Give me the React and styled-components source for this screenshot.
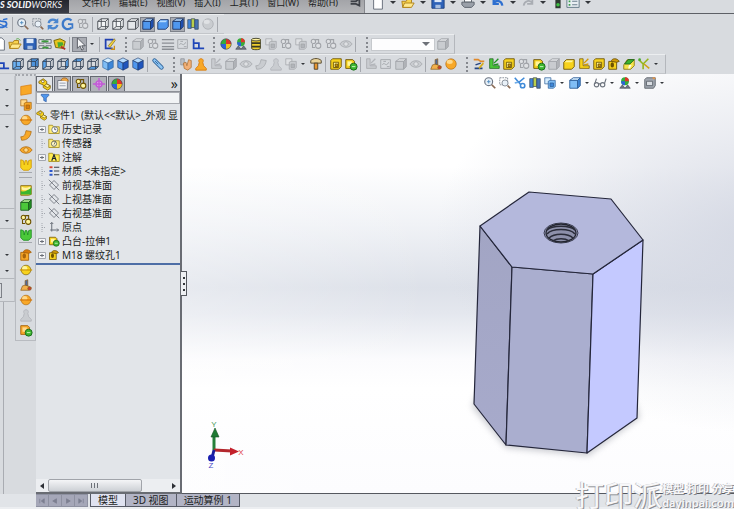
import React from 'react'
import styled, { createGlobalStyle, css } from 'styled-components'

const font = `'Noto Sans', 'Noto Sans CJK SC', sans-serif`

const GlobalStyle = createGlobalStyle`
  * {
    box-sizing: border-box;
  }

  body {
    margin: 0;
    overflow: hidden;
    background: #d8dbdf;
    color: #1c1e22;
    font-family: ${font};
    font-size: 10px;
    line-height: 14px;
  }

  button,
  input,
  select {
    margin: 0;
    padding: 0;
    border: 0;
    border-radius: 0;
    background: none;
    color: inherit;
    font: inherit;
  }
`

/* ---------- icons ---------- */

const tones = {
  blue: ['#b5dcff', '#4f97ee', '#1f55bd', '#1b3566'],
  sky: ['#d8efff', '#7fbdf5', '#3d86d8', '#2b5c96'],
  gold: ['#fff59a', '#f7d21c', '#d19a08', '#6d5200'],
  orange: ['#ffd98a', '#f8a828', '#d87a0c', '#a8640c'],
  green: ['#b9f59a', '#4bc93a', '#1f8f22', '#1b5c1c'],
  gray: ['#dfe1e4', '#c9ccd0', '#b2b5ba', '#a0a3a8'],
  wire: ['#f3f5f7', '#e4e7ea', '#cfd3d8', '#44484f']
}

const wireCube = <path d="M2 5h9v9H2zM2 5l4-3h8v9l-3 3M11 5l3-3M6 2v9h8M6 11l-4 3" fill="none" stroke="#2f3d50" />

const shapes = {
  cube: ([l, m, d, s]) => (
    <g stroke={s} strokeLinejoin="round">
      <path d="M2 5l4-3h8l-3 3z" fill={l} />
      <path d="M2 5h9v9H2z" fill={m} />
      <path d="M11 5l3-3v9l-3 3z" fill={d} />
    </g>
  ),
  frame: ([l, m, d, s]) => (
    <g stroke={s} fill="none">
      <path d="M2 5h9v9H2zM2 5l4-3h8v9l-3 3M11 5l3-3" fill={l} />
      <path d="M6 2v9h8M6 11l-4 3" />
    </g>
  ),
  faceFront: () => (
    <g>
      <path d="M2 5h9v9H2z" fill="#6cb2f4" />
      {wireCube}
    </g>
  ),
  faceBack: () => (
    <g>
      <path d="M6 2h8v9H6z" fill="#4c93dd" />
      {wireCube}
    </g>
  ),
  faceLeft: () => (
    <g>
      <path d="M2 5l4-3v9l-4 3z" fill="#5ba6ef" />
      {wireCube}
    </g>
  ),
  faceRight: () => (
    <g>
      <path d="M11 5l3-3v9l-3 3z" fill="#5ba6ef" />
      {wireCube}
    </g>
  ),
  faceTop: () => (
    <g>
      <path d="M2 5l4-3h8l-3 3z" fill="#5ba6ef" />
      {wireCube}
    </g>
  ),
  faceBottom: () => (
    <g>
      <path d="M2 14l4-3h8l-3 3z" fill="#5ba6ef" />
      {wireCube}
    </g>
  ),
  iso: ([l, m, d, s]) => (
    <g stroke={s} strokeWidth=".7">
      <path d="M8 1l6 3-6 3-6-3z" fill={l} />
      <path d="M2 4l6 3v8l-6-3z" fill={m} />
      <path d="M14 4L8 7v8l6-3z" fill={d} />
    </g>
  ),
  block: ([l, m, d, s]) => (
    <g stroke={s}>
      <path d="M2 4l2-2h10v9l-3 3H2z" fill={m} />
      <path d="M5 6h6v6H5z" fill={l} />
      <path d="M7 8h3v3H7z" fill={d} />
    </g>
  ),
  solid: ([l, m, d, s]) => (
    <g stroke={s}>
      <path d="M2 6l3-3h9v8l-3 3H2z" fill={m} />
      <path d="M3 6l2-2h8l-2 2z" fill={l} stroke="none" />
    </g>
  ),
  stack: ([l, m, d, s]) => (
    <g stroke={s} strokeWidth=".8">
      <path d="M2 2h7v7H2z" fill={l} />
      <path d="M6 6l2-1h6v7l-2 2H6z" fill={m} />
      <path d="M8 8h4v4H8z" fill={d} />
    </g>
  ),
  blockg: ([l, m, d, s]) => (
    <g>
      <path d="M2 3h8l2 2v8H2z" fill={m} stroke={s} />
      <path d="M4 5h5v5H4z" fill={l} />
      <circle cx="11" cy="11" r="4" fill="#3cb52e" stroke="#17651a" />
      <path d="M9 11h4" stroke="#d8ffd0" />
    </g>
  ),
  ball: ([l, m, d, s]) => (
    <g>
      <circle cx="8" cy="8" r="5.5" fill={m} stroke={s} strokeWidth=".7" />
      <ellipse cx="6.5" cy="6" rx="3" ry="2.5" fill={l} />
      <path d="M1 8h14" stroke={d} strokeWidth="1.5" />
    </g>
  ),
  sphere: ([l, m, d, s]) => (
    <g>
      <circle cx="8" cy="8" r="6" fill={m} stroke={s} strokeWidth=".7" />
      <ellipse cx="6.5" cy="5.5" rx="3.5" ry="2.5" fill={l} />
    </g>
  ),
  sweep: ([l, m, d, s]) => (
    <path d="M2 10c4 0 5-2 6-7l6 1c-1 6-4 10-11 10z" fill={m} stroke={s} strokeWidth=".8" />
  ),
  loft: ([l, m, d, s]) => (
    <g stroke={s} strokeWidth=".8">
      <path d="M1 8c3-5 11-5 14 0-3 5-11 5-14 0z" fill={m} />
      <path d="M5 8l3-3 3 3-3 3z" fill={l} />
    </g>
  ),
  plate: ([l, m, d, s]) => <path d="M2 4l12-2v10L2 14z" fill={m} stroke={d} strokeWidth=".8" />,
  prongs: ([l, m, d, s]) => (
    <path d="M2 2l3 1 1 5 1-5h2l1 5 1-5 3-1v9l-3 3H5l-3-3z" fill={m} stroke={d} />
  ),
  chess: ([l, m, d, s]) => (
    <path d="M8 2c3 0 3 3 2 4l1 4 3 3v2H2v-2l3-3 1-4C5 5 5 2 8 2z" fill={m} stroke={d} />
  ),
  corner: ([l, m, d, s]) => (
    <g>
      <path d="M3 2v11h11v-3H7V2z" fill={m} stroke={s} strokeWidth=".8" />
      <path d="M8 7l5-5M8 9l5-1" stroke={d} strokeWidth="1.5" />
    </g>
  ),
  hole: ([l, m, d, s]) => (
    <g>
      <path d="M2 5h9v9H2z" fill={m} stroke={s} />
      <path d="M5 5c0-4 7-4 9 0l-3 1z" fill={d} stroke={s} />
      <ellipse cx="6" cy="9" rx="2" ry="3" fill={s} />
    </g>
  ),
  surface: () => (
    <g>
      <path d="M2 3h12v10l-3 1H2z" fill="#f1cf2c" stroke="#8a6b12" />
      <path d="M2 9c4 2 8-1 12-4v8H2z" fill="#3cb52e" />
      <path d="M3 4c3 2 6 2 10 0v2c-4 3-8 3-10 1z" fill="#fff3a3" />
    </g>
  ),
  sheet: ([l, m, d, s]) => (
    <g fill="none" stroke={s}>
      <path d="M2 3h11v10H2z" />
      <path d="M4 9c2-5 4 4 7-3M5 5h3M9 11h3" />
    </g>
  ),
  part: ([l, m, d, s]) => (
    <g stroke={s} strokeWidth=".8">
      <path d="M1 5l5-3 4 3v3l4 2v3l-3 2-5-3V9L1 7z" fill={m} />
      <circle cx="5.5" cy="5" r="1.5" fill="#fff" />
      <path d="M10 8l4 2-3 2-4-2z" fill={l} />
    </g>
  ),
  link: ([l, m, d, s]) => (
    <g stroke={s} fill="none" strokeWidth="1.2">
      <circle cx="5" cy="5" r="2.5" fill={l} />
      <circle cx="10.5" cy="10" r="3" fill={l} />
      <path d="M7 3h4v4M4 8v4h3" />
    </g>
  ),
  zoom: () => (
    <g fill="none" stroke="#6b7482">
      <circle cx="6.5" cy="6.5" r="4.5" fill="#e9f1f8" strokeWidth="1.3" />
      <path d="M4.5 6.5h4M6.5 4.5v4" stroke="#4d88bd" />
      <path d="M10 10l4 4" stroke="#8a6b55" strokeWidth="2" />
    </g>
  ),
  zoomArea: () => (
    <g fill="none" stroke="#7d8590">
      <path d="M2 2h9v8H2z" strokeDasharray="2 1" />
      <circle cx="8" cy="8" r="3.5" fill="#e9f1f8" />
      <path d="M11 11l3 3" stroke="#8a6b55" strokeWidth="2" />
    </g>
  ),
  rotate: () => (
    <g fill="none" stroke="#4a86cf" strokeWidth="2.6">
      <path d="M3 7c1-5 8-5 10-1M13 9c-1 5-8 5-10 1" />
      <path d="M14 1v6H8zM2 15V9h6z" fill="#4a86cf" stroke="none" />
    </g>
  ),
  spin: () => (
    <g fill="none" stroke="#3c79c9" strokeWidth="2.6">
      <path d="M12 4C8 0 2 3 2 8s6 8 10 4" />
      <path d="M8 8h5v5" strokeWidth="2" />
    </g>
  ),
  swirl: () => (
    <g fill="none" stroke="#2f6fd0" strokeWidth="2">
      <path d="M3 3c2 4 8 0 9 4s-6 6-9 4" />
      <path d="M2 7l11 5M8 3l5-1" strokeWidth="1.5" />
    </g>
  ),
  measure: () => (
    <g fill="none" stroke="#3f8ad8" strokeWidth="1.8">
      <path d="M2 2l7 8M13 2l-6 5" />
      <circle cx="11" cy="11" r="2.5" />
      <path d="M2 8l4-1" stroke="#6cabe8" />
    </g>
  ),
  clip: () => (
    <g fill="none" strokeLinecap="round">
      <path d="M4 4l8 8" stroke="#2d5f96" strokeWidth="5" />
      <path d="M4 4l8 8" stroke="#8cc4f2" strokeWidth="3" />
      <path d="M5 5l3 3" stroke="#2d5f96" />
    </g>
  ),
  section: () => (
    <g stroke="#35465a" strokeWidth=".8">
      <path d="M2 3h4v10H2z" fill="#3e86df" />
      <path d="M6 2h4v10H6z" fill="#b9cf4c" />
      <path d="M10 3h4v11h-4z" fill="#4673b5" />
    </g>
  ),
  page: () => <path d="M3 1h7l3 3v11H3z" fill="#fff" stroke="#5a6270" />,
  folder: () => (
    <g stroke="#a97c12">
      <path d="M1 6h5l1-2h5v3l-2 6H2z" fill="#f8d34f" />
      <path d="M4 8h11l-3 5H2z" fill="#ffe98c" />
      <path d="M9 3c2-2 4-1 5 1" stroke="#4ba13a" fill="none" />
    </g>
  ),
  disk: () => (
    <g>
      <path d="M1 2h14v12H1z" fill="#2d62b8" stroke="#1d3f7c" />
      <path d="M4 2h8v5H4z" fill="#dbe7f7" />
      <path d="M5 10h6v4H5z" fill="#a9c0e0" />
    </g>
  ),
  tools: () => (
    <g fill="none" stroke="#59616c">
      <path d="M1 3h6v4H1zM9 3h6v4H9zM1 10h6v3H1zM9 10h6v3H9z" fill="#e9ecef" />
      <path d="M4 5h8M5 12h7" stroke="#3b9b3b" strokeWidth="2" />
    </g>
  ),
  render: () => (
    <g>
      <path d="M1 4l7-2 6 3-2 8-9-1z" fill="#e8c51d" stroke="#6d5d00" />
      <path d="M5 6l6 0 1 3-6 3z" fill="#47a934" />
      <path d="M9 11l5 3" stroke="#b0322b" strokeWidth="2" />
    </g>
  ),
  cursor: () => <path d="M5 1v12l3-3 2 5 2-1-2-4h4z" fill="#f4f5f7" stroke="#4b5058" />,
  sketch: () => (
    <g fill="none">
      <path d="M12 3H3v10h8" stroke="#1f3fb0" strokeWidth="2" />
      <path d="M6 10l7-8 1 2-6 8z" fill="#f5d33b" stroke="#6d5a17" strokeWidth=".7" />
      <path d="M13 10v4h-4" stroke="#cc8f1b" strokeWidth="1.5" />
    </g>
  ),
  lines: () => <path d="M1 3h14M1 7h14M1 11h14M1 14h14" stroke="#8b8f95" strokeWidth="1.5" />,
  axis: () => (
    <g stroke="#1f46b8" fill="none" strokeWidth="2">
      <path d="M3 2v11h12M3 7h6v6" />
    </g>
  ),
  rgb: () => (
    <g>
      <path d="M8 8V2a6 6 0 0 1 6 6z" fill="#e0352b" />
      <path d="M8 8h6a6 6 0 0 1-6 6z" fill="#f1c21b" />
      <path d="M8 8v6a6 6 0 0 1-6-6z" fill="#2b63d9" />
      <path d="M8 8H2a6 6 0 0 1 6-6z" fill="#35ad3a" />
      <circle cx="8" cy="8" r="6" fill="none" stroke="#3c4450" strokeWidth=".7" />
    </g>
  ),
  scene: () => (
    <g>
      <circle cx="8" cy="6" r="4.5" fill="#35ad3a" />
      <path d="M8 6V1.5A4.5 4.5 0 0 1 12.5 6z" fill="#e0352b" />
      <path d="M3.5 6H8v4.5A4.5 4.5 0 0 1 3.5 6z" fill="#2b63d9" />
      <path d="M2 14l3-4 3 4 3-4 3 4z" fill="#6f7680" stroke="#3c4450" strokeWidth=".7" />
    </g>
  ),
  drum: () => (
    <g stroke="#3b3b23">
      <path d="M3 3v10c0 2 10 2 10 0V3z" fill="#f1cf2c" />
      <path d="M3 7h10M3 11h10" strokeWidth="2" />
      <ellipse cx="8" cy="3" rx="5" ry="1.5" fill="#fff3a3" />
    </g>
  ),
  bolt: () => (
    <g stroke="#4c3f25">
      <path d="M2 4c3-3 9-3 12 0v3H2z" fill="#ead39a" />
      <path d="M6 7h4v7H6z" fill="#e8952e" />
    </g>
  ),
  arrows: () => (
    <g fill="none" strokeWidth="1.8">
      <path d="M2 3h5l3 2h4" stroke="#e0892a" />
      <path d="M3 13h9M4 9l6-2" stroke="#27457f" />
      <path d="M8 13l5-6" stroke="#d5ac18" />
    </g>
  ),
  fillet: () => (
    <g>
      <path d="M2 9l4-6h8v7l-4 4H2z" fill="#f5e34a" stroke="#8a7a19" />
      <path d="M3 8l4-5h7l-5 5z" fill="#3cb52e" stroke="#17651a" />
      <path d="M8 9h3l-2 4H7z" fill="#fffbe0" />
    </g>
  ),
  star: () => (
    <g fill="none" strokeWidth="1.8">
      <path d="M2 3l5 5 6-6M7 8v6" stroke="#94b51c" />
      <path d="M8 8l6 5" stroke="#d1a117" />
      <circle cx="3" cy="3" r="1.5" fill="#47a934" />
    </g>
  ),
  undo: () => <path d="M3 8c3-4 9-3 10 3M3 3v6h6" fill="none" stroke="#2d6fd0" strokeWidth="2.5" />,
  redo: () => <path d="M13 8c-3-4-9-3-10 3M13 3v6H7" fill="none" stroke="#a9adb3" strokeWidth="2" />,
  print: () => (
    <g stroke="#555c66">
      <path d="M4 2h8v5H4z" fill="#fff" />
      <path d="M1 7h14v3l-3 3H4l-3-3z" fill="#9aa0a9" />
    </g>
  ),
  light: () => (
    <g>
      <path d="M5 0h6v14H5z" fill="#2f3a32" />
      <circle cx="8" cy="10" r="2" fill="#3fc144" />
    </g>
  ),
  options: () => (
    <g stroke="#59707f">
      <path d="M1 2h14v11H1z" fill="#e8eef2" />
      <path d="M3 6h2M3 10h2" stroke="#3aa04a" strokeWidth="2" />
      <path d="M7 6h6M7 10h6" />
    </g>
  ),
  pin: () => <path d="M3 6h6l4-3v8l-4-2H3" fill="none" stroke="#3d4047" strokeWidth="2" />,
  glasses: () => (
    <g fill="none" stroke="#6d747e" strokeWidth="1.3">
      <circle cx="4" cy="10" r="2.5" />
      <circle cx="11" cy="10" r="2.5" />
      <path d="M2 9l2-6M13 9l2-6M6 9h3" />
    </g>
  ),
  monitor: () => (
    <g stroke="#5d636c">
      <path d="M2 4l2-2h10v9l-2 3H2z" fill="#9fa5ae" />
      <path d="M4 6h7v5H4z" fill="#d9dde2" />
      <path d="M11 2l3 1" stroke="#e2954a" strokeWidth="2" />
    </g>
  ),
  hand: () => (
    <g stroke="#8c5d1b" fill="#f2b04b" strokeWidth=".8">
      <path d="M2 14l2-5 4-1 6 3-3 3z" />
      <path d="M7 8V3l3-1v7z" fill="#4f6a9b" />
      <circle cx="12" cy="12" r="2" fill="#c8402e" />
    </g>
  ),
  hands: () => (
    <g strokeWidth=".8">
      <path d="M2 2h4v7H2z" fill="#bcc0c6" stroke="#888c93" />
      <path d="M5 7l3-1 1 4 2-7 3 1v8l-4 3-4-2z" fill="#f2b077" stroke="#a86a2c" />
    </g>
  ),
  filter: () => <path d="M2 2h12v2l-4 4v6l-4-2V8L2 4z" fill="#4f97ee" stroke="#1f4b94" />,
  config: () => (
    <g>
      <path d="M2 4h11v10H2z" fill="#f3f4f6" stroke="#6a707a" />
      <path d="M4 7h7M4 10h7" stroke="#8b95a5" />
      <path d="M6 4c0-4 8-4 8 1" fill="#f0a847" stroke="#a36414" />
    </g>
  ),
  target: () => (
    <g stroke="#c25ad6" fill="none" strokeWidth="1.5">
      <circle cx="8" cy="8" r="3.5" fill="#dca0e8" />
      <path d="M8 1v14M1 8h14" />
    </g>
  ),
  history: () => (
    <g stroke="#9b8412">
      <path d="M1 3h5l1 2h8v9H1z" fill="#ffec7a" />
      <circle cx="9" cy="9" r="4" fill="#fff" stroke="#55606e" />
      <path d="M9 6v3h2" fill="none" stroke="#2c3340" />
    </g>
  ),
  sensor: () => (
    <g stroke="#9b8412">
      <path d="M1 3h5l1 2h8v9H1z" fill="#ffec7a" />
      <circle cx="8" cy="9" r="3.5" fill="#fff7c4" stroke="#4c525b" />
      <path d="M8 10l2-4" stroke="#4c525b" />
    </g>
  ),
  note: () => (
    <g stroke="#9b8412">
      <path d="M1 3h5l1 2h8v9H1z" fill="#ffec50" />
      <path d="M5 13l3-8 3 8M6 10h4" fill="none" stroke="#1c2430" strokeWidth="1.5" />
    </g>
  ),
  material: () => (
    <g strokeWidth="2.5">
      <path d="M2 3h4" stroke="#d8432e" />
      <path d="M2 8h4M2 13h4" stroke="#2b56c9" />
      <path d="M8 3h7M8 8h7M8 13h7" stroke="#3a4048" strokeWidth="1.5" />
    </g>
  ),
  plane: () => (
    <g fill="none" stroke="#5d636c">
      <path d="M8 2l6 6-6 6-6-6z" />
      <path d="M1 1l14 14" />
    </g>
  ),
  origin: () => (
    <g fill="none" stroke="#646a73" strokeWidth="1.3">
      <path d="M5 2v10h9M3 4l2-2 2 2M12 10l2 2-2 2" />
      <path d="M3 12h2v2" />
    </g>
  )
}

const Svg = styled.svg`
  display: block;
  flex: none;
  width: ${props => props.$size}px;
  height: ${props => props.$size}px;
`

// name is "shape" or "shape:tone"
const Icon = ({ name, size = 14 }) => {
  const [shape, tone = 'gray'] = name.split(':')
  return (
    <Svg viewBox="0 0 16 16" $size={size} aria-hidden="true">
      {shapes[shape](tones[tone])}
    </Svg>
  )
}

/* ---------- header ---------- */

const Page = styled.div`
  display: flex;
  flex-direction: column;
  min-height: 100vh;
  background: #d8dbdf;
`

const Header = styled.header`
  display: flex;
  align-items: stretch;
  height: 14px;
  overflow: hidden;
  border-bottom: 1px solid #5d6066;
`

const Logo = styled.div`
  display: flex;
  gap: 2px;
  width: 69px;
  flex: none;
  background: linear-gradient(#23252d, #3a3d47);
  color: #f4f4f6;
  font-family: Lato, sans-serif;
  font-size: 9px;
  font-style: italic;
  line-height: 9px;

  b {
    font-weight: 900;
  }
`

const Menu = styled.nav`
  display: flex;
  gap: 9px;
  width: 296px;
  flex: none;
  padding-left: 13px;
  background: linear-gradient(#a3a4a8, #b4b5b8);
  border-right: 1px solid #85878c;
`

const MenuItem = styled.button`
  height: 5px;
  flex: none;
  font-size: 9px;
  line-height: 5px;
  white-space: nowrap;
`

const QuickBar = styled.div`
  display: flex;
  height: 5px;
  padding-left: 5px;
`

const QuickButton = styled.button`
  display: flex;
  flex: none;
  align-items: center;
  justify-content: center;
  width: 15px;
  height: 5px;
`

/* ---------- toolbars ---------- */

const Bars = styled.div`
  display: flex;
  flex-direction: column;
  align-items: flex-start;
`

const Bar = styled.div`
  display: flex;
  align-items: center;
  height: 20px;
  padding-right: 4px;
  border-top: 1px solid #eceef0;
  border-right: ${props => (props.$open ? '0' : '1px solid #b4b7bc')};
  border-bottom: 1px solid #c3c6ca;
`

const Tool = styled.button`
  display: flex;
  flex: none;
  align-items: center;
  justify-content: ${props => (props.$cut ? 'flex-end' : 'center')};
  width: ${props => props.$cut || props.$width || 15}px;
  height: 15px;
  overflow: hidden;
  ${props =>
    props.$pressed &&
    css`
      background: #a9acb3;
      outline: 1px solid #7e828a;
      outline-offset: -1px;
    `}
`

const Sep = styled.span`
  flex: none;
  width: 5px;
  height: 15px;

  &::after {
    content: '';
    display: block;
    width: 1px;
    height: 100%;
    margin-left: 2px;
    background: #a5a8ae;
  }
`

const Grip = styled.span`
  flex: none;
  width: 13px;
  height: 15px;

  &::after {
    content: '';
    display: block;
    width: 0;
    height: 100%;
    margin-left: 8px;
    border-left: 2px dotted #85888e;
  }
`

const Arrow = styled.span`
  display: block;
  width: 0;
  height: 0;
  border: ${props => props.$size || 2}px solid transparent;
  border-top-color: ${props => props.$color || '#33363b'};
  border-bottom-width: 0;
`

const Combo = styled.label`
  display: flex;
  align-items: center;
  width: 64px;
  height: 13px;
  padding-right: 4px;
  background: #fdfdfe;
  border: 1px solid #c6c9cd;
`

const ComboSelect = styled.select`
  appearance: none;
  flex: 1;
  min-width: 0;
  height: 11px;
  outline: 0;
`

const Quick = ({ spec }) => (
  <QuickButton aria-label={spec === 'v' ? 'More' : spec}>
    {spec === 'v' ? <Arrow $size={3} /> : <Icon name={spec} />}
  </QuickButton>
)

// '|' separator, '::' drag grip, 'v' drop arrow, leading '*' pressed
const ToolItem = ({ spec, cut }) => {
  if (spec === '|') return <Sep />
  if (spec === '::') return <Grip />
  if (spec === 'v') {
    return (
      <Tool $width={10} aria-label="More">
        <Arrow />
      </Tool>
    )
  }
  if (spec === 'combo') {
    return (
      <Combo>
        <ComboSelect aria-label="Layer" />
        <Arrow $size={4} $color="#6d7178" />
      </Combo>
    )
  }
  const pressed = spec.startsWith('*')
  const name = pressed ? spec.slice(1) : spec
  return (
    <Tool $cut={cut} $pressed={pressed} aria-label={name.replace(':', ' ')}>
      <Icon name={name} />
    </Tool>
  )
}

const menus = ['文件(F)', '编辑(E)', '视图(V)', '插入(I)', '工具(T)', '窗口(W)', '帮助(H)']

const quickTools = ['page', 'v', 'folder', 'v', 'disk', 'v', 'print', 'v', 'undo', 'v', 'redo', 'v', 'light', 'options', 'v']

const rows = [
  {
    cut: 10,
    open: true,
    items:
      'swirl | zoom zoomArea rotate spin link | frame:wire frame:wire cube:wire *cube:blue solid:blue *cube:blue section sphere:gray |'
  },
  {
    cut: 7,
    items:
      'page folder disk tools render | *cursor v | sketch :: cube:gray link lines sheet axis :: rgb scene drum stack:gray link stack:gray link link loft:gray | :: combo cube:gray'
  },
  {
    cut: 10,
    items:
      'axis faceFront faceBack faceLeft faceRight faceTop faceBottom iso:sky iso:blue iso:blue | clip :: hands chess:orange corner:gray cube:gray loft:gray sweep:gray chess:gray stack:gray v bolt | block:gold blockg:gold | corner:gray sheet cube:gray loft:gray | hand sphere:orange :: arrows corner:green block:gold link blockg:gold cube:gray solid:gold corner:gold block:gold hole:gold fillet star v'
  }
]

/* ---------- side columns ---------- */

const Body = styled.div`
  display: flex;
  flex: 1;
`

const Dock = styled.aside`
  display: flex;
  flex-direction: column;
  width: 15px;
  flex: none;
  padding-top: 2px;
`

const DockCell = styled.div`
  display: flex;
  flex-direction: column;
  align-items: center;
  height: ${props => props.$height}px;
  padding-top: ${props => props.$pad || 10}px;
  gap: 12px;
  border-right: 1px solid #c2c5ca;
  border-bottom: 1px solid #b4b7bc;
`

const DockArrow = styled.button`
  display: flex;
  align-items: center;
  height: 4px;
`

const DockBox = styled.div`
  width: 2px;
  height: 15px;
  margin-right: auto;
  border: 1px solid #7d8087;
  border-left: 0;
`

const DockRest = styled.div`
  flex: 1;
  width: 4px;
  border-right: 1px solid #a9acb2;
`

const Strip = styled.div`
  width: 21px;
  flex: none;
`

const StripInner = styled.div`
  display: flex;
  flex-direction: column;
  align-items: center;
  height: 267px;
  padding-top: 6px;
  border: 1px solid #b8bbc0;
  border-top: 2px dotted #a5a8ae;
`

const StripSep = styled.span`
  width: 13px;
  height: 5px;
  border-top: 1px solid #a5a8ae;
`

const dockCells = [
  { height: 39, pad: 12, arrows: 2 },
  { height: 94, arrows: 1 },
  { height: 20, arrows: 1 },
  { height: 50, pad: 24, arrows: 2 },
  { height: 23, pad: 4, arrows: 0 }
]

const stripTools = [
  'plate:orange', 'stack:orange', 'ball:orange', 'sweep:orange', 'loft:orange', 'prongs:gold', '-', '-',
  'surface', 'cube:green', 'link:gold', 'prongs:green', '-',
  'hole:orange', 'ball:gold', 'hand', 'ball:orange', 'chess:gray', 'blockg:orange'
]

/* ---------- feature tree ---------- */

const Panel = styled.section`
  display: flex;
  flex-direction: column;
  width: 146px;
  flex: none;
  padding-top: 2px;
  background: #e2e5e9;
  border-right: 2px solid #696c73;
  border-bottom: 2px solid #696c73;
`

const PanelTabs = styled.div`
  display: flex;
  gap: 1px;
  height: 16px;
  background: #d8dbdf;
  border-bottom: 1px solid #8d9097;
`

const PanelTab = styled.button`
  display: flex;
  align-items: center;
  justify-content: center;
  width: 17px;
  background: ${props => (props.$active ? '#e2e5e9' : '#b1b3ba')};
  border: 1px solid #666a72;
  border-bottom: 0;
`

const Expand = styled.button`
  margin-left: auto;
  padding-right: 2px;
  font-size: 14px;
  line-height: 12px;
`

const Filter = styled.label`
  display: flex;
  align-items: center;
  gap: 2px;
  height: 12px;
  padding-left: 3px;
  background: #f1f3f5;
  border: 1px solid #a7aab0;

  input {
    flex: 1;
    min-width: 0;
    height: 8px;
    outline: 0;
  }
`

const Tree = styled.ul`
  margin: 0;
  padding: 3px 0 1px;
  list-style: none;
  border-bottom: 2px solid #4d6ea6;
`

const Root = styled.li`
  display: flex;
  align-items: center;
  gap: 2px;
  height: 15px;
  overflow: hidden;
  white-space: pre;
`

const Branch = styled.div`
  display: flex;
  align-items: center;
  height: 14px;
  padding-left: 2px;
  gap: 2px;
  white-space: nowrap;
`

const Twist = styled.button`
  display: flex;
  align-items: center;
  justify-content: center;
  width: 8px;
  height: 9px;
  color: #555a62;
`

const branches = [
  { icon: 'history', label: '历史记录', open: true },
  { icon: 'sensor', label: '传感器' },
  { icon: 'note', label: '注解', open: true },
  { icon: 'material', label: '材质 <未指定>' },
  { icon: 'plane', label: '前视基准面' },
  { icon: 'plane', label: '上视基准面' },
  { icon: 'plane', label: '右视基准面' },
  { icon: 'origin', label: '原点' },
  { icon: 'blockg:gold', label: '凸台-拉伸1', open: true },
  { icon: 'hole:gold', label: 'M18 螺纹孔1', open: true }
]

const TwistMark = ({ open }) => (
  <svg width="8" height="9" viewBox="0 0 8 9" aria-hidden="true" fill="none" stroke="#a3a7ae">
    {open ? (
      <>
        <path d="M.5 1.5h7v6h-7z" fill="#f4f5f7" />
        <path d="M2 4.5h4M4 3v3" stroke="#6a6f77" />
      </>
    ) : (
      <path d="M4 0v9M4 4.5h4" strokeDasharray="1 1" />
    )}
  </svg>
)

const Scroll = styled.div`
  display: flex;
  align-items: center;
  height: 13px;
  margin-top: auto;
  background: #eceef1;
`

const ScrollArrow = styled.button`
  display: flex;
  justify-content: center;
  width: 12px;
  flex: none;

  &::after {
    content: '';
    border: 3px solid transparent;
    border-left: ${props => (props.$right ? '4px solid #2d3036' : 0)};
    border-right: ${props => (props.$right ? 0 : '4px solid #2d3036')};
  }
`

const Track = styled.div`
  flex: 1;
  height: 100%;
`

const Thumb = styled.div`
  display: flex;
  align-items: center;
  justify-content: center;
  gap: 2px;
  width: 78%;
  height: 100%;
  background: linear-gradient(#f4f5f7, #cdd0d5);
  border: 1px solid #a1a4aa;
  border-radius: 2px;

  i {
    width: 1px;
    height: 5px;
    background: #6d7178;
  }
`

/* ---------- viewport ---------- */

const Viewport = styled.main`
  position: relative;
  flex: 1;
  min-width: 0;
  border-bottom: 1px solid #55585f;
  background: linear-gradient(90deg, rgba(255, 255, 255, 0.3), rgba(255, 255, 255, 0) 45%),
    radial-gradient(ellipse 62% 48% at 108% 38%, rgba(209, 213, 225, 0.9), rgba(209, 213, 225, 0) 100%),
    linear-gradient(#ffffff 22%, #f0f2f6 36%, #dde1e9 51%, #e4e7ee 57%, #fbfbfd 68%, #ffffff 75%, #fcfcfe 100%);
`

const Canvas = styled.svg`
  display: block;
  width: 100%;
  height: 100%;
`

const Hud = styled.div`
  position: absolute;
  top: 1px;
  right: 67px;
  display: flex;
  align-items: center;
`

const Handle = styled.button`
  position: absolute;
  top: 197px;
  left: -1px;
  display: flex;
  flex-direction: column;
  align-items: center;
  justify-content: center;
  gap: 4px;
  width: 6px;
  height: 25px;
  background: #eef0f3;
  border: 1px solid #55585f;
  border-left: 0;

  i {
    width: 2px;
    height: 2px;
    background: #33363b;
  }
`

const hudTools = ['zoom', 'zoomArea', 'measure', 'section', 'stack:sky', 'v', 'cube:sky', 'v', 'glasses', 'v', 'scene', 'v', 'monitor', 'v']

const Model = () => (
  <Canvas viewBox="182 74 552 419" role="img" aria-label="Hex standoff">
    <defs>
      <linearGradient id="left" x1="0" x2="0" y1="0" y2="1">
        <stop offset="0" stopColor="#a2a5c4" />
        <stop offset="1" stopColor="#a7aacb" />
      </linearGradient>
      <filter id="soft" x="-10%" y="-10%" width="120%" height="130%">
        <feGaussianBlur stdDeviation="3" />
      </filter>
    </defs>
    <path d="M476 395l-4 12 34 41 82 8 52-38-4-15z" fill="#9a9ca6" opacity=".5" filter="url(#soft)" />
    <g stroke="#24263a" strokeWidth="1.2" strokeLinejoin="round">
      <path d="M480 226l32 41-6 178-32-41z" fill="url(#left)" />
      <path d="M512 267l81 7-6 179-81-8z" fill="#aaaecf" />
      <path d="M593 274l50-34-6 178-50 35z" fill="#c4c9ff" />
      <path d="M529 192l82 7 32 41-50 34-81-7-32-41z" fill="#b4b8dc" />
    </g>
    <ellipse cx="561" cy="233" rx="17" ry="10" fill="#a6aacb" stroke="#3a3d50" />
    <ellipse cx="561" cy="233" rx="15" ry="9" fill="#8d90aa" stroke="#22242f" strokeWidth="1.3" />
    <g fill="none" stroke="#292b38" strokeWidth="1.6">
      <path d="M547 230c5-5 23-5 28 0" />
      <path d="M547 234c5-6 23-6 28 0" />
      <path d="M549 238c5-5 19-5 24 0" />
      <path d="M553 241c4-3 12-3 16 0" />
    </g>
    <g fill="none" strokeWidth="3">
      <path d="M214 450v-15" stroke="#26803a" />
      <path d="M214 450l18 1" stroke="#b3272d" />
      <path d="M214 450l-2 8" stroke="#1b1f9c" />
    </g>
    <path d="M215 428l4 9h-8z" fill="#1f7a33" stroke="#125022" strokeWidth=".6" />
    <path d="M239 451.5l-9 4v-8z" fill="#c3202b" />
    <circle cx="211.5" cy="458" r="3.500" fill="#1a1fb0" />
    <g fontFamily="Liberation Sans, sans-serif" fontSize="8" textAnchor="middle">
      <text x="214" y="427" fill="#4a9a5c">Y</text>
      <text x="241" y="455" fill="#e04048">X</text>
      <text x="211" y="468" fill="#4a4ac8">Z</text>
    </g>
  </Canvas>
)

/* ---------- bottom ---------- */

const Footer = styled.footer`
  position: relative;
  display: flex;
  height: 16px;
  padding: 0 0 3px 36px;
  background: #e1e4e8;
  border-bottom: 3px solid #eceef1;
`

const Steps = styled.div`
  display: flex;
  height: 13px;
  padding-right: 2px;
`

const Step = styled.button`
  display: flex;
  align-items: center;
  justify-content: center;
  width: 13px;
  background: #a5a7b8;
  border: 1px solid #8e91a1;
  border-left: 0;
`

const SheetTab = styled.button`
  height: 13px;
  padding: 0 7px;
  background: ${props => (props.$active ? '#dfe2f0' : '#b2b4c5')};
  border: 1px solid #565a66;
  border-top: 0;
  margin-right: -1px;
  line-height: 11px;
  white-space: nowrap;
`

const Watermark = styled.div`
  position: absolute;
  right: 0;
  bottom: -3px;
  display: flex;
  align-items: center;
  color: #f7f7f9;
  text-shadow: 1px 1px 0 #8b8d92, -1px 0 0 #c4c6ca;
  white-space: nowrap;
`

const MarkBig = styled.span`
  font-size: 29px;
  line-height: 28px;
`

const MarkSmall = styled.span`
  display: flex;
  flex-direction: column;
  font-size: 11px;
  font-weight: 600;
  line-height: 14px;
`

const steps = ['M5 2v6M11 2L7 5l4 3z', 'M10 2L5 5l5 3z', 'M6 2l5 3-5 3z', 'M5 2l4 3-4 3zM11 2v6']

const App = () => (
  <Page>
    <GlobalStyle />
    <Header>
      <Logo>
        <b>S</b>
        <span>
          <b>SOLID</b>WORKS
        </span>
      </Logo>
      <Menu>
        {menus.map(label => (
          <MenuItem key={label}>{label}</MenuItem>
        ))}
        <Quick spec="pin" />
      </Menu>
      <QuickBar>
        {quickTools.map((spec, i) => (
          <Quick key={i} spec={spec} />
        ))}
      </QuickBar>
    </Header>

    <Bars>
      {rows.map((row, r) => (
        <Bar key={r} $open={row.open}>
          {row.items.split(' ').map((spec, i) => (
            <ToolItem key={i} spec={spec} cut={i === 0 ? row.cut : 0} />
          ))}
        </Bar>
      ))}
    </Bars>

    <Body>
      <Dock>
        {dockCells.map(({ height, pad, arrows }) => (
          <DockCell key={height} $height={height} $pad={pad}>
            {arrows === 0 && <DockBox />}
            {Array.from({ length: arrows }, (_, i) => (
              <DockArrow key={i} aria-label="More">
                <Arrow />
              </DockArrow>
            ))}
          </DockCell>
        ))}
        <DockRest />
      </Dock>

      <Strip>
        <StripInner>
          {stripTools.map((spec, i) => (spec === '-' ? <StripSep key={i} /> : <ToolItem key={i} spec={spec} />))}
        </StripInner>
      </Strip>

      <Panel>
        <PanelTabs role="tablist">
          {['part:gold', 'config', 'link:gold', 'target', 'rgb'].map((name, i) => (
            <PanelTab key={name} role="tab" aria-label={name} $active={i === 0}>
              <Icon name={name} />
            </PanelTab>
          ))}
          <Expand>»</Expand>
        </PanelTabs>
        <Filter>
          <Icon name="filter" size={10} />
          <input type="text" aria-label="Filter" />
        </Filter>
        <Tree>
          <Root>
            <Icon name="part:gold" size={12} />
            {'零件1  (默认<<默认>_外观 显'}
          </Root>
          {branches.map(({ icon, label, open }) => (
            <li key={label}>
              <Branch>
                <Twist aria-label="Expand">
                  <TwistMark open={open} />
                </Twist>
                <Icon name={icon} size={12} />
                {label}
              </Branch>
            </li>
          ))}
        </Tree>
        <Scroll>
          <ScrollArrow aria-label="Scroll left" />
          <Track>
            <Thumb>
              <i />
              <i />
              <i />
            </Thumb>
          </Track>
          <ScrollArrow $right aria-label="Scroll right" />
        </Scroll>
      </Panel>

      <Viewport>
        <Model />
        <Hud>
          {hudTools.map((spec, i) => (
            <ToolItem key={i} spec={spec} />
          ))}
        </Hud>
        <Handle aria-label="Collapse panel">
          <i />
          <i />
          <i />
        </Handle>
      </Viewport>
    </Body>

    <Footer>
      <Steps>
        {steps.map(d => (
          <Step key={d} aria-label="Step">
            <svg width="12" height="10" viewBox="0 0 16 10" aria-hidden="true">
              <path d={d} fill="#7c7f90" stroke="#7c7f90" />
            </svg>
          </Step>
        ))}
      </Steps>
      <SheetTab $active>模型</SheetTab>
      <SheetTab>3D 视图</SheetTab>
      <SheetTab>运动算例 1</SheetTab>
      <Watermark>
        <MarkBig>打印派</MarkBig>
        <MarkSmall>
          <span>模型 打印 分享</span>
          <span>dayinpai.com</span>
        </MarkSmall>
      </Watermark>
    </Footer>
  </Page>
)

export default App
